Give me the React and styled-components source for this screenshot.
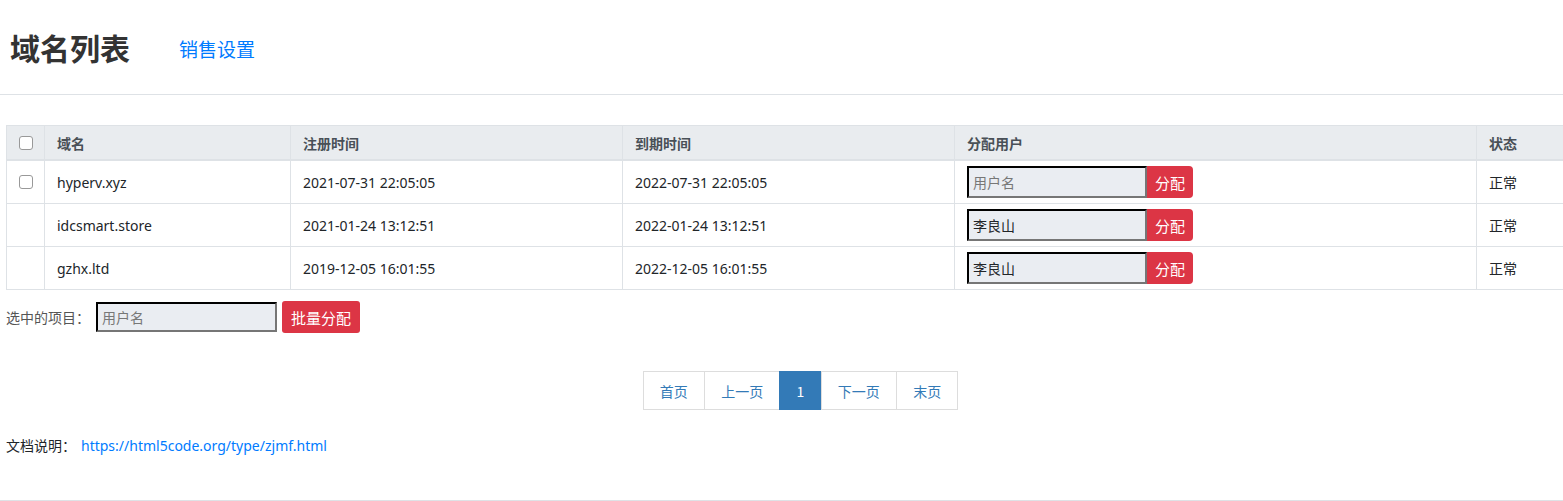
import React from 'react'
import styled, { createGlobalStyle, css } from 'styled-components'

const GlobalStyle = createGlobalStyle`
  html, body {
    margin: 0;
    padding: 0;
    overflow: hidden;
    background: #fff;
  }
  body {
    font-family: "Noto Sans", "Noto Sans CJK SC", sans-serif;
    font-size: 14px;
    color: #212529;
  }
`

const domains = [
  { name: 'hyperv.xyz', reg: '2021-07-31 22:05:05', exp: '2022-07-31 22:05:05', user: '', check: true },
  { name: 'idcsmart.store', reg: '2021-01-24 13:12:51', exp: '2022-01-24 13:12:51', user: '李良山' },
  { name: 'gzhx.ltd', reg: '2019-12-05 16:01:55', exp: '2022-12-05 16:01:55', user: '李良山' },
]

const Page = styled.div`
  width: 1600px;
`

const TopBar = styled.div`
  display: flex;
  align-items: center;
  height: 94px;
  padding: 0 10px;
  border-bottom: 1px solid #dee2e6;
`

const Title = styled.h2`
  margin: 0 49px 0 0;
  font-family: "Noto Sans CJK SC", sans-serif;
  font-size: 30px;
  font-weight: 700;
  color: #333;
  line-height: 1;
`

const TabLink = styled.a`
  font-family: "Noto Sans CJK SC", sans-serif;
  font-size: 19px;
  color: #007bff;
  text-decoration: none;
  margin-top: 2px;
`

const Content = styled.div`
  width: 1590px;
  padding: 30px 0 0 6px;
`

const Table = styled.table`
  width: 1590px;
  border-collapse: collapse;
  table-layout: fixed;
  border: 1px solid #dee2e6;
`

const Th = styled.th`
  height: 33px;
  padding: 0 12px;
  text-align: left;
  font-family: "Noto Sans CJK SC", sans-serif;
  font-size: 14px;
  font-weight: 700;
  color: #495057;
  background: #e9ecef;
  border: 1px solid #dee2e6;
  border-bottom: 2px solid #dee2e6;
  ${p => p.$center && css`text-align: center; padding: 0;`}
`

const Td = styled.td`
  height: 42px;
  padding: 0 12px;
  border: 1px solid #dee2e6;
  vertical-align: middle;
  ${p => p.$center && css`text-align: center; padding: 0;`}
`

const Check = styled.input.attrs({ type: 'checkbox' })`
  appearance: none;
  display: block;
  margin: 0 auto;
  width: 14px;
  height: 14px;
  border: 1px solid #999;
  border-radius: 3px;
  background: #fff;
`

const AssignGroup = styled.div`
  display: flex;
  align-items: stretch;
  height: 32px;
`

const UserInput = styled.input`
  box-sizing: border-box;
  width: ${p => p.$width || 180}px;
  height: ${p => p.$height || 32}px;
  padding: 0 4px;
  border: 2px inset #767676;
  border-top-color: #222;
  border-left-color: #222;
  background: #eaedf2;
  font-family: "Noto Sans CJK SC", sans-serif;
  font-size: 14px;
  color: #212529;
  outline: none;

  &::placeholder {
    color: #777;
  }
`

const RedButton = styled.button`
  border: none;
  background: #dc3545;
  color: #fff;
  font-family: "Noto Sans CJK SC", sans-serif;
  font-size: ${p => p.$size || 15}px;
  padding: 0 ${p => p.$pad || 8}px;
  border-radius: ${p => (p.$joined ? '0 4px 4px 0' : '3px')};
  height: ${p => p.$height || 32}px;
  cursor: pointer;
`

const BatchRow = styled.div`
  display: flex;
  align-items: center;
  margin-top: 11px;
  gap: 5px;
  color: #555;
  font-family: "Noto Sans CJK SC", sans-serif;
`

const BatchLabel = styled.span`
  margin-right: 1px;
`

const Pager = styled.ul`
  display: flex;
  justify-content: center;
  list-style: none;
  margin: 38px 0 0;
  padding: 0;
`

const PageItem = styled.li`
  box-sizing: border-box;
  height: 39px;
  padding: 0 16.2px;
  display: flex;
  align-items: center;
  border: 1px solid #ddd;
  margin-left: -1px;
  font-family: "Noto Sans CJK SC", sans-serif;
  color: #337ab7;
  background: #fff;
  ${p => p.$active && css`
    background: #337ab7;
    border-color: #337ab7;
    color: #fff;
  `}
`

const DocLine = styled.div`
  margin-top: 25px;
  font-family: "Noto Sans CJK SC", sans-serif;
  font-size: 14px;
  color: #212529;
  padding-bottom: 45px;
  border-bottom: 1px solid #dee2e6;
  margin-left: -6px;
  padding-left: 6px;
`

const DocLink = styled.a`
  margin-left: 5px;
  font-family: "Noto Sans", sans-serif;
  color: #007bff;
  text-decoration: none;
`

const App = () => {
  return (
    <Page>
      <GlobalStyle />
      <TopBar>
        <Title>域名列表</Title>
        <TabLink href="#">销售设置</TabLink>
      </TopBar>
      <Content>
        <Table>
          <colgroup>
            <col style={{ width: 38 }} />
            <col style={{ width: 246 }} />
            <col style={{ width: 332 }} />
            <col style={{ width: 332 }} />
            <col style={{ width: 522 }} />
            <col />
          </colgroup>
          <thead>
            <tr>
              <Th $center><Check /></Th>
              <Th>域名</Th>
              <Th>注册时间</Th>
              <Th>到期时间</Th>
              <Th>分配用户</Th>
              <Th>状态</Th>
            </tr>
          </thead>
          <tbody>
            {domains.map(d => (
              <tr key={d.name}>
                <Td $center>{d.check && <Check />}</Td>
                <Td>{d.name}</Td>
                <Td>{d.reg}</Td>
                <Td>{d.exp}</Td>
                <Td>
                  <AssignGroup>
                    <UserInput placeholder="用户名" defaultValue={d.user} />
                    <RedButton $joined>分配</RedButton>
                  </AssignGroup>
                </Td>
                <Td>正常</Td>
              </tr>
            ))}
          </tbody>
        </Table>
        <BatchRow>
          <BatchLabel>选中的项目：</BatchLabel>
          <UserInput placeholder="用户名" $width={181} $height={30} />
          <RedButton $size={15} $pad={9}>批量分配</RedButton>
        </BatchRow>
        <Pager>
          <PageItem>首页</PageItem>
          <PageItem>上一页</PageItem>
          <PageItem $active>1</PageItem>
          <PageItem>下一页</PageItem>
          <PageItem>末页</PageItem>
        </Pager>
        <DocLine>
          文档说明：<DocLink href="#">https://html5code.org/type/zjmf.html</DocLink>
        </DocLine>
      </Content>
    </Page>
  )
}

export default App
